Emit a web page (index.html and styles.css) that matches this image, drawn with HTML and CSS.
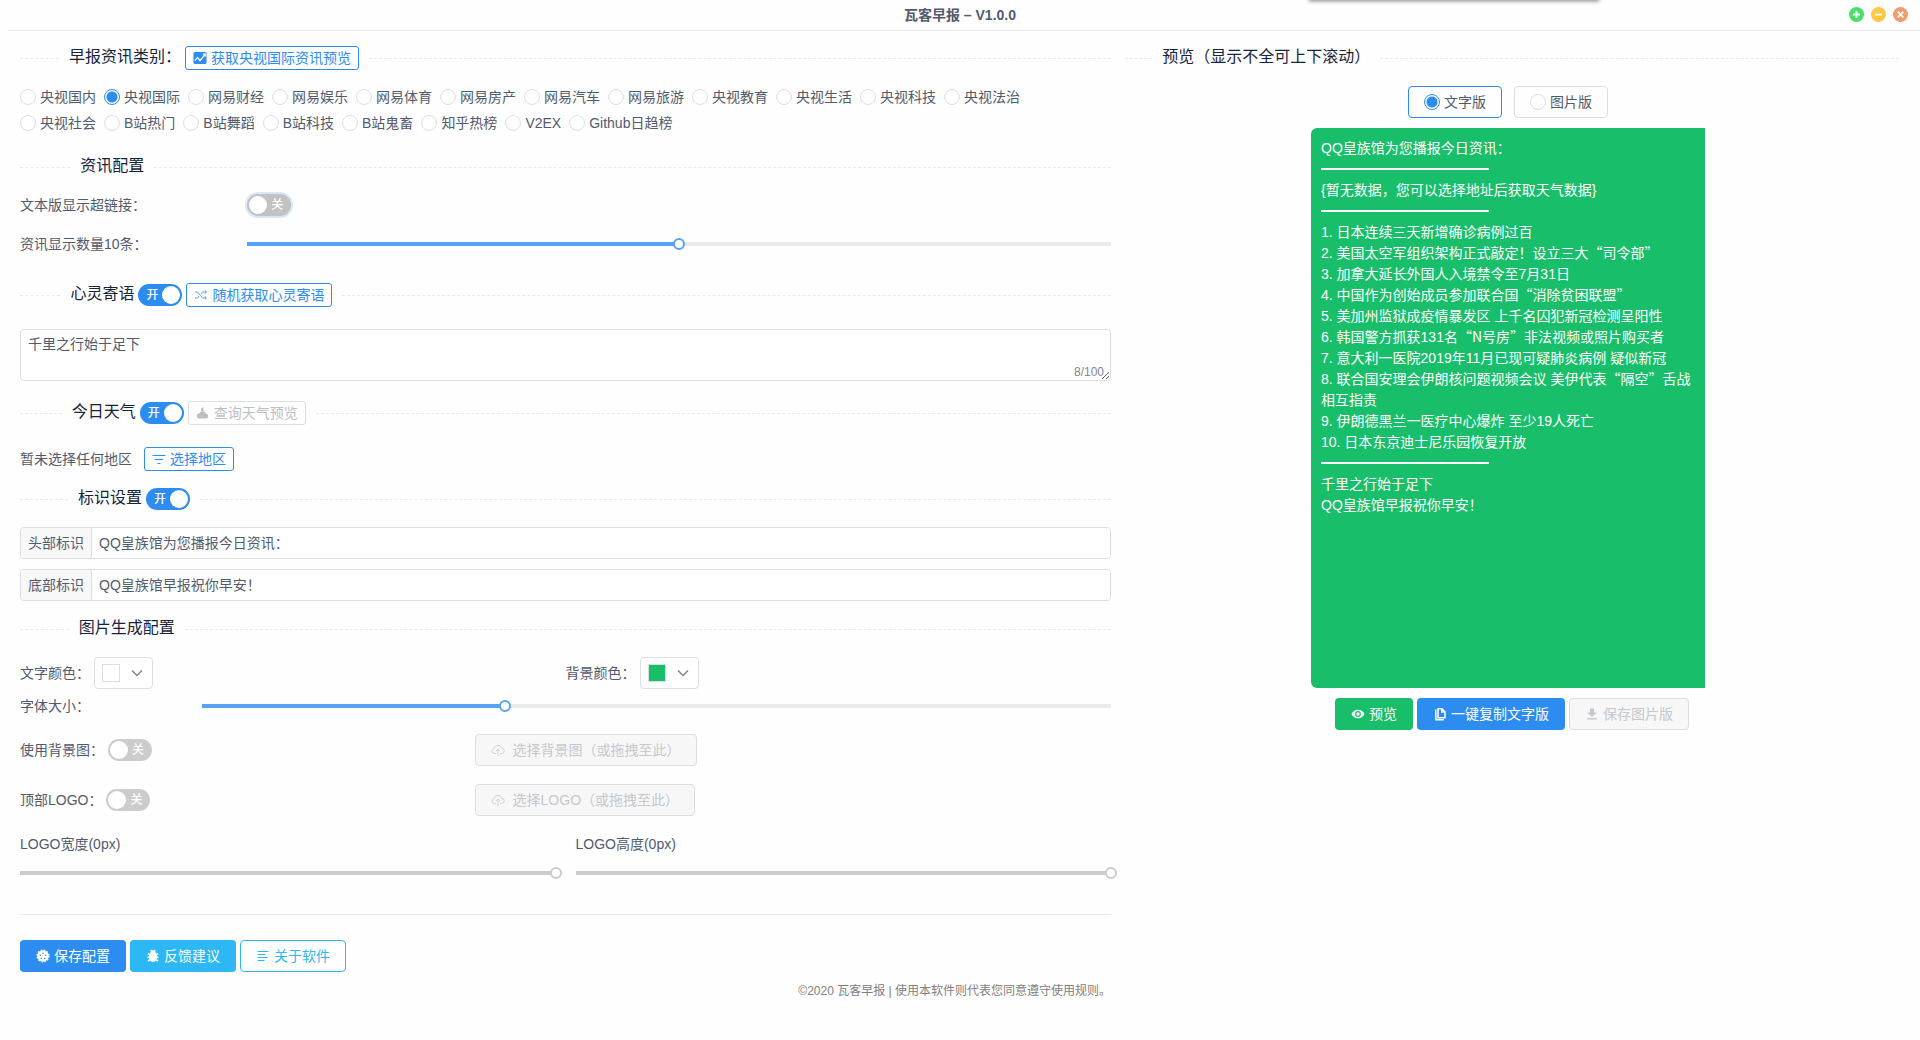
FILE: index.html
```html
<!DOCTYPE html>
<html lang="zh-CN">
<head>
<meta charset="utf-8">
<meta name="viewport" content="width=device-width, initial-scale=1">
<title>瓦客早报</title>
<link rel="stylesheet" href="styles.css">
</head>
<body>
<div class="top-tab" aria-hidden="true"></div>
<header class="titlebar">
  <h1 class="title">瓦客早报 – V1.0.0</h1>
  <div class="window-controls">
    <button type="button" class="dot dot-max" aria-label="最大化"><svg viewBox="0 0 16 16"><path d="M8 4.2v7.6M4.2 8h7.6"/></svg></button>
    <button type="button" class="dot dot-min" aria-label="最小化"><svg viewBox="0 0 16 16"><path d="M4.2 8h7.6"/></svg></button>
    <button type="button" class="dot dot-close" aria-label="关闭"><svg viewBox="0 0 16 16"><path d="M5 5l6 6M11 5l-6 6"/></svg></button>
  </div>
</header>

<main class="layout">
  <form class="settings">
    <div class="divider divider-first">
      <div class="divider-text"><h2>早报资讯类别：</h2>
        <button type="button" class="btn btn-small btn-outline"><svg class="icon" viewBox="0 0 14 14"><rect x=".5" y="1" width="13" height="12" rx="1.5" fill="currentColor"/><path d="M2 9.500l2.600-3 2.400 3.200L12 3.500M9.800 3.200h2.400v2.400" fill="none" stroke="#fff" stroke-width="1.200"/></svg>获取央视国际资讯预览</button>
      </div>
    </div>

    <div class="categories" role="radiogroup" aria-label="早报资讯类别">
      <label class="radio"><input type="radio" name="cat">央视国内</label>
      <label class="radio"><input type="radio" name="cat" checked>央视国际</label>
      <label class="radio"><input type="radio" name="cat">网易财经</label>
      <label class="radio"><input type="radio" name="cat">网易娱乐</label>
      <label class="radio"><input type="radio" name="cat">网易体育</label>
      <label class="radio"><input type="radio" name="cat">网易房产</label>
      <label class="radio"><input type="radio" name="cat">网易汽车</label>
      <label class="radio"><input type="radio" name="cat">网易旅游</label>
      <label class="radio"><input type="radio" name="cat">央视教育</label>
      <label class="radio"><input type="radio" name="cat">央视生活</label>
      <label class="radio"><input type="radio" name="cat">央视科技</label>
      <label class="radio"><input type="radio" name="cat">央视法治</label>
      <label class="radio"><input type="radio" name="cat">央视社会</label>
      <label class="radio"><input type="radio" name="cat">B站热门</label>
      <label class="radio"><input type="radio" name="cat">B站舞蹈</label>
      <label class="radio"><input type="radio" name="cat">B站科技</label>
      <label class="radio"><input type="radio" name="cat">B站鬼畜</label>
      <label class="radio"><input type="radio" name="cat">知乎热榜</label>
      <label class="radio"><input type="radio" name="cat">V2EX</label>
      <label class="radio"><input type="radio" name="cat">Github日趋榜</label>
    </div>

    <div class="divider divider-news">
      <div class="divider-text"><h2>资讯配置</h2></div>
    </div>
    <div class="row row-5">
      <label for="links">文本版显示超链接：</label>
      <label class="switch switch-focus"><input type="checkbox" id="links"><span>关</span></label>
    </div>
    <div class="row row-5">
      <label for="count">资讯显示数量10条：</label>
      <input class="slider" type="range" id="count" min="0" max="20" value="10" style="--fill: .5">
    </div>

    <div class="divider divider-quote">
      <div class="divider-text"><h2>心灵寄语</h2>
        <label class="switch switch-on"><input type="checkbox" checked aria-label="心灵寄语"><span>开</span></label>
        <button type="button" class="btn btn-small btn-outline"><svg class="icon icon-thin" viewBox="0 0 14 14"><path d="M1 4h2.500l5 6H12M1 10h2.500l1.600-2M7 6l1.500-2H12M10.800 2.500L12.500 4l-1.700 1.500M10.800 8.500l1.700 1.500-1.700 1.500"/></svg>随机获取心灵寄语</button>
      </div>
    </div>
    <div class="note">
      <textarea aria-label="心灵寄语内容" maxlength="100">千里之行始于足下</textarea>
      <span class="note-count">8/100</span>
    </div>

    <div class="divider divider-weather">
      <div class="divider-text"><h2>今日天气</h2>
        <label class="switch switch-on"><input type="checkbox" checked aria-label="今日天气"><span>开</span></label>
        <button type="button" class="btn btn-small btn-muted" disabled><svg class="icon" viewBox="0 0 14 14"><path fill="currentColor" d="M3.500 12.500a2.500 2.500 0 0 1-.3-5A3.600 3.600 0 0 1 10 7.600a2.500 2.500 0 0 1 .4 4.900zM5 5.200A2.700 2.700 0 0 1 7.800 1.500 3 3 0 0 0 9 5.600 4.500 4.500 0 0 0 5 5.200z"/></svg>查询天气预览</button>
      </div>
    </div>
    <div class="region">
      <span>暂未选择任何地区</span>
      <button type="button" class="btn btn-small btn-outline"><svg class="icon icon-line" viewBox="0 0 14 14"><path d="M.5 3.500h13M3 7.500h8M5.500 11.500h3"/></svg>选择地区</button>
    </div>

    <div class="divider divider-mark">
      <div class="divider-text"><h2>标识设置</h2>
        <label class="switch switch-on"><input type="checkbox" checked aria-label="标识设置"><span>开</span></label>
      </div>
    </div>
    <div class="marks">
      <div class="input-group"><label for="head">头部标识</label><input type="text" id="head" value="QQ皇族馆为您播报今日资讯："></div>
      <div class="input-group"><label for="foot">底部标识</label><input type="text" id="foot" value="QQ皇族馆早报祝你早安！"></div>
    </div>

    <div class="divider divider-mark">
      <div class="divider-text"><h2>图片生成配置</h2></div>
    </div>
    <div class="colors">
      <div class="color-field"><label for="fg">文字颜色：</label>
        <button type="button" class="picker" id="fg"><span class="swatch swatch-white"></span><svg class="chevron" viewBox="0 0 14 14"><path d="M2 4.500l5 5 5-5"/></svg></button></div>
      <div class="color-field"><label for="bg">背景颜色：</label>
        <button type="button" class="picker" id="bg"><span class="swatch swatch-green"></span><svg class="chevron" viewBox="0 0 14 14"><path d="M2 4.500l5 5 5-5"/></svg></button></div>
    </div>
    <div class="row row-4">
      <label for="size">字体大小：</label>
      <input class="slider" type="range" id="size" min="0" max="30" value="10" style="--fill: .333">
    </div>
    <div class="row row-10">
      <div class="switch-field"><label for="usebg">使用背景图：</label><label class="switch"><input type="checkbox" id="usebg"><span>关</span></label></div>
      <button type="button" class="btn btn-disabled btn-upload" disabled><svg class="icon icon-thin" viewBox="0 0 14 14"><path d="M5 10.500H3.300A2.500 2.500 0 0 1 3 5.600 4 4 0 0 1 10.800 5.300a2.600 2.600 0 0 1-.2 5.200H9M7 13V6M5 8l2-2 2 2"/></svg><span>选择背景图<span class="paren" lang="zh-Hant">（</span>或拖拽至此<span class="paren" lang="zh-Hant">）</span></span></button>
    </div>
    <div class="row row-10 row-logo">
      <div class="switch-field"><label for="uselogo">顶部LOGO：</label><label class="switch"><input type="checkbox" id="uselogo"><span>关</span></label></div>
      <button type="button" class="btn btn-disabled btn-upload" disabled><svg class="icon icon-thin" viewBox="0 0 14 14"><path d="M5 10.500H3.300A2.500 2.500 0 0 1 3 5.600 4 4 0 0 1 10.800 5.300a2.600 2.600 0 0 1-.2 5.200H9M7 13V6M5 8l2-2 2 2"/></svg><span>选择LOGO<span class="paren" lang="zh-Hant">（</span>或拖拽至此<span class="paren" lang="zh-Hant">）</span></span></button>
    </div>
    <div class="logo-size">
      <div class="logo-field"><label for="lw">LOGO宽度(0px)</label><input class="slider" type="range" id="lw" value="100" disabled style="--fill: 1"></div>
      <div class="logo-field"><label for="lh">LOGO高度(0px)</label><input class="slider" type="range" id="lh" value="100" disabled style="--fill: 1"></div>
    </div>

    <hr class="rule">
    <div class="actions">
      <button type="button" class="btn btn-primary"><svg class="icon" viewBox="0 0 14 14"><circle cx="7" cy="7" r="5.800" fill="currentColor"/><circle cx="7" cy="7" r="6" fill="none" stroke="currentColor" stroke-width="1.200" stroke-dasharray="1.600 1.540"/><g fill="#2d8cf0"><circle cx="7" cy="4.200" r=".8"/><circle cx="9.700" cy="6.200" r=".8"/><circle cx="4.300" cy="6.200" r=".8"/><circle cx="8.700" cy="9.500" r=".8"/><circle cx="5.300" cy="9.500" r=".8"/></g></svg>保存配置</button>
      <button type="button" class="btn btn-info"><svg class="icon" viewBox="0 0 14 14"><ellipse cx="7" cy="8" rx="4.200" ry="5" fill="currentColor"/><path d="M4.300 4a2.700 2.700 0 0 1 5.400 0z" fill="currentColor"/><path d="M4.800.8L6 2.500M9.200.8L8 2.500M1.800 4.500l3 1.500M12.200 4.500l-3 1.500M1.500 8.200h11M1.800 12l3-1.500M12.200 12l-3-1.500" stroke="currentColor" stroke-width="1.400"/></svg>反馈建议</button>
      <button type="button" class="btn btn-info-outline"><svg class="icon icon-line" viewBox="0 0 14 14"><path d="M1.500 2.500h11M1.500 5.500h8M1.500 8.500h10M1.500 11.500h7"/></svg>关于软件</button>
    </div>
    <footer class="copyright">©2020 瓦客早报 | 使用本软件则代表您同意遵守使用规则。</footer>
  </form>

  <section class="preview">
    <div class="divider divider-first">
      <div class="divider-text"><h2>预览<span class="paren" lang="zh-Hant">（</span>显示不全可上下滚动<span class="paren" lang="zh-Hant">）</span></h2></div>
    </div>
    <div class="stage">
      <div class="modes">
        <label class="radio radio-box radio-box-on"><input type="radio" name="mode" checked>文字版</label>
        <label class="radio radio-box"><input type="radio" name="mode">图片版</label>
      </div>
      <article class="bulletin">
        <p>QQ皇族馆为您播报今日资讯：</p>
        <hr>
        <p>{暂无数据，您可以选择地址后获取天气数据}</p>
        <hr>
        <p>1. 日本连续三天新增确诊病例过百</p>
        <p>2. 美国太空军组织架构正式敲定！设立三大<span class="mark">“司令部”</span></p>
        <p>3. 加拿大延长外国人入境禁令至7月31日</p>
        <p>4. 中国作为创始成员参加联合国<span class="mark">“消除贫困联盟”</span></p>
        <p>5. 美加州监狱成疫情暴发区 上千名囚犯新冠检测呈阳性</p>
        <p>6. 韩国警方抓获131名<span class="mark">“N号房”</span>非法视频或照片购买者</p>
        <p>7. 意大利一医院2019年11月已现可疑肺炎病例 疑似新冠</p>
        <p>8. 联合国安理会伊朗核问题视频会议 美伊代表<span class="mark">“隔空”</span>舌战相互指责</p>
        <p>9. 伊朗德黑兰一医疗中心爆炸 至少19人死亡</p>
        <p>10. 日本东京迪士尼乐园恢复开放</p>
        <hr>
        <p>千里之行始于足下</p>
        <p>QQ皇族馆早报祝你早安！</p>
      </article>
    </div>
    <div class="preview-actions">
      <button type="button" class="btn btn-success"><svg class="icon" viewBox="0 0 14 14"><path fill="currentColor" fill-rule="evenodd" d="M7 2.800C4 2.800 1.600 4.600.5 7 1.600 9.400 4 11.200 7 11.200s5.400-1.800 6.500-4.200C12.400 4.600 10 2.800 7 2.800zM7 9.900a2.900 2.900 0 1 1 0-5.800 2.900 2.900 0 0 1 0 5.800zM7 5.300a1.700 1.700 0 1 0 0 3.400 1.700 1.700 0 0 0 0-3.400z"/></svg>预览</button>
      <button type="button" class="btn btn-primary"><svg class="icon" viewBox="0 0 14 14"><path d="M5 1.700h4l3 3v6.100H5zM8.700 1.700v3.300H12M2.800 2.500v10.200h8" fill="none" stroke="currentColor" stroke-width="1.500"/></svg>一键复制文字版</button>
      <button type="button" class="btn btn-disabled" disabled><svg class="icon" viewBox="0 0 14 14"><path fill="currentColor" d="M5 1.500h4v4h2.700L7 10 2.300 5.500H5zM2.300 11h9.400v1.500H2.300z"/></svg>保存图片版</button>
    </div>
  </section>
</main>
</body>
</html>
```
FILE: styles.css
```css
:root {
  --primary: #2d8cf0;
  --info: #2db7f5;
  --success: #19be6b;
  --text: #515a6e;
  --heading: #17233d;
  --border: #dcdee2;
  --line: #e8eaec;
  --muted: #c5c8ce;
  --page: #fefefe;
}

* {
  box-sizing: border-box;
}

body {
  margin: 0;
  background: var(--page);
  color: var(--text);
  font-family: "Liberation Sans", "Noto Sans CJK SC", sans-serif;
  font-size: 14px;
  line-height: 24px;
}

button,
input,
textarea {
  font: inherit;
  color: inherit;
  margin: 0;
}

h1,
h2,
p {
  margin: 0;
}

/* Title bar */
.top-tab {
  position: absolute;
  top: -10px;
  left: 1310px;
  width: 288px;
  height: 10px;
  box-shadow: 0 0 4px 1px rgba(0, 0, 0, .5);
}

.titlebar {
  display: grid;
  grid-template-columns: 1fr auto 1fr;
  align-items: center;
  height: 31px;
  padding: 0 12px;
  background: linear-gradient(var(--line), var(--line)) 8px bottom / 100% 1px no-repeat;
}

.title {
  grid-column: 2;
  font-size: 14px;
  font-weight: 700;
  line-height: 28px;
  padding-bottom: 2px;
}

.window-controls {
  display: flex;
  justify-content: flex-end;
  gap: 7px;
  padding-bottom: 2px;
}

.dot {
  display: flex;
  width: 15px;
  height: 15px;
  padding: 0;
  border: 0;
  border-radius: 50%;
}

.dot svg {
  width: 15px;
  height: 15px;
  fill: none;
  stroke: #fff;
  stroke-width: 2;
}

.dot-max { background: #47e068; }
.dot-min { background: #ffc648; }
.dot-close { background: #f39b6d; }

.layout {
  display: grid;
  grid-template-columns: 117fr 83fr;
  gap: 14px;
  padding: 0 21px 0 20px;
}

/* Section dividers */
.divider {
  display: flex;
  align-items: center;
  height: 24px;
}

.divider::before,
.divider::after {
  content: "";
  width: 5%;
  border-top: 1px dashed var(--line);
}

.divider::after {
  width: 95%;
}

.divider-text {
  display: flex;
  flex: none;
  align-items: center;
  gap: 4px;
  padding: 0 10px;
}

.divider h2 {
  color: var(--heading);
  font-size: 16px;
  font-weight: 400;
  line-height: 22px;
  padding-bottom: 2px;
}

.divider-first { margin-top: 15px; }
.divider-news { margin-top: 19px; }
.divider-quote { margin-top: 27px; }
.divider-weather { margin-top: 20px; }
.divider-mark { margin-top: 16px; }

/* Centred full-width brackets */
.paren {
  font-family: "Noto Sans CJK TC", sans-serif;
  line-height: 1;
}

/* Buttons */
.btn {
  display: inline-flex;
  flex: none;
  align-items: center;
  justify-content: center;
  gap: 4px;
  height: 32px;
  padding: 0 15px;
  border: 1px solid transparent;
  border-radius: 4px;
  background: #fff;
  line-height: 20px;
  white-space: nowrap;
}

.btn-small {
  height: 24px;
  padding: 0 7px;
  border-radius: 3px;
}

.btn-outline {
  border-color: var(--primary);
  color: var(--primary);
}

.btn-muted {
  border-color: var(--border);
  color: #bbbec4;
}

.btn-disabled {
  border-color: var(--border);
  background: #f7f7f7;
  color: var(--muted);
}

.btn-upload {
  justify-self: start;
  gap: 8px;
}

.btn-primary {
  background: var(--primary);
  color: #fff;
}

.btn-info {
  background: var(--info);
  color: #fff;
}

.btn-success {
  background: var(--success);
  color: #fff;
}

.btn-info-outline {
  border-color: var(--info);
  color: var(--info);
}

.icon {
  width: 14px;
  height: 14px;
}

.icon-line,
.icon-thin {
  fill: none;
  stroke: currentColor;
  stroke-width: 1;
}

.icon-thin {
  stroke-width: .8;
}

/* Radios */
.categories {
  display: flex;
  flex-wrap: wrap;
  margin-top: 14px;
  padding-right: 16px;
}

.radio {
  display: inline-flex;
  align-items: center;
  gap: 4px;
  margin-right: 8px;
  line-height: 26px;
}

.radio input {
  appearance: none;
  width: 16px;
  height: 16px;
  border: 1px solid var(--border);
  border-radius: 50%;
  background: #fff;
}

.radio input:checked {
  border-color: var(--primary);
  background: radial-gradient(circle, var(--primary) 5px, #fff 6px);
}

.radio-box {
  height: 32px;
  margin: 0;
  padding: 0 15px;
  border: 1px solid var(--border);
  border-radius: 4px;
}

.radio-box-on {
  border-color: var(--primary);
}

/* Form rows */
.row {
  display: grid;
  align-items: center;
  margin-top: 16px;
}

.row-4 {
  grid-template-columns: 4fr 20fr;
  margin-top: 5px;
}

.row-5 {
  grid-template-columns: 5fr 19fr;
}

.row-10 {
  grid-template-columns: 10fr 14fr;
}

.row-logo {
  margin-top: 18px;
}

.divider-news + .row {
  margin-top: 14px;
}

.divider-news + .row + .row {
  margin-top: 15px;
}

.switch {
  position: relative;
  display: block;
  flex: none;
  width: 44px;
  height: 22px;
  padding-left: 24px;
  border-radius: 11px;
  background: #ccc;
  color: #fff;
  font-size: 12px;
  font-weight: 500;
  line-height: 22px;
}

.switch input {
  position: absolute;
  inset: 0;
  width: 100%;
  height: 100%;
  opacity: 0;
}

.switch::after {
  content: "";
  position: absolute;
  top: 2px;
  left: 2px;
  width: 18px;
  height: 18px;
  border-radius: 50%;
  background: #fff;
}

.switch-on {
  padding-left: 8px;
  background: var(--primary);
}

.switch-on::after {
  left: 24px;
}

.switch-focus {
  background: #c2c2c2;
  box-shadow: 0 0 0 2px #d5e8fc;
}

.switch-field {
  display: flex;
  align-items: center;
  gap: 4px;
}

/* The rail is inset by half a thumb so the thumb centre meets its ends */
.slider {
  --rail: #e8eaec;
  --bar: #57a3f3;
  appearance: none;
  width: calc(100% + 12px);
  height: 12px;
  margin: 0 -6px;
  background:
    linear-gradient(var(--bar), var(--bar)) 6px center / calc((100% - 12px) * var(--fill)) 4px no-repeat,
    linear-gradient(var(--rail), var(--rail)) 6px center / calc(100% - 12px) 4px no-repeat;
}

.slider:disabled {
  --bar: #ccc;
}

.slider::-webkit-slider-thumb {
  appearance: none;
  width: 12px;
  height: 12px;
  border: 2px solid var(--bar);
  border-radius: 50%;
  background: #fff;
}

.note {
  position: relative;
  display: flex;
  margin-top: 22px;
}

.note textarea {
  width: 100%;
  height: 52px;
  padding: 4px 7px;
  border: 1px solid var(--border);
  border-radius: 4px;
  background: #fff;
  line-height: 21px;
  resize: vertical;
}

.note-count {
  position: absolute;
  right: 7px;
  bottom: 0;
  color: #808695;
  font-size: 12px;
  line-height: 18px;
}

.region {
  display: flex;
  align-items: center;
  gap: 12px;
  margin-top: 22px;
}

.marks {
  display: grid;
  gap: 10px;
  margin-top: 16px;
}

.input-group {
  display: flex;
  height: 32px;
  border: 1px solid var(--border);
  border-radius: 4px;
  overflow: hidden;
}

.input-group label {
  padding: 0 7px;
  border-right: 1px solid var(--border);
  background: #f8f8f9;
  line-height: 30px;
}

.input-group input {
  flex: 1;
  min-width: 0;
  padding: 0 7px;
  border: 0;
  background: #fff;
}

.colors {
  display: grid;
  grid-template-columns: 1fr 1fr;
  margin-top: 16px;
}

.color-field {
  display: flex;
  align-items: center;
  gap: 4px;
}

.picker {
  display: flex;
  align-items: center;
  justify-content: space-between;
  width: 59px;
  height: 32px;
  padding: 0 8px 0 7px;
  border: 1px solid var(--border);
  border-radius: 4px;
  background: #fff;
}

.swatch {
  width: 18px;
  height: 18px;
  border: 1px solid var(--border);
}

.swatch-white { background: #fff; }
.swatch-green { background: var(--success); }

.chevron {
  width: 14px;
  height: 14px;
  fill: none;
  stroke: #808695;
  stroke-width: 1.500;
}

.logo-size {
  display: grid;
  grid-template-columns: 1fr 1fr;
  gap: 20px;
  margin-top: 16px;
}

.logo-field {
  display: grid;
  gap: 11px;
}

.rule {
  margin: 35px 0 25px;
  border: 0;
  border-top: 1px solid var(--line);
}

.actions,
.preview-actions {
  display: flex;
  gap: 4px;
}

.copyright {
  margin-top: 10px;
  color: #808080;
  font-size: 12px;
  line-height: 18px;
  text-align: right;
}

/* Preview */
.stage {
  padding-right: 8px;
}

.modes {
  display: flex;
  justify-content: center;
  gap: 12px;
  margin-top: 16px;
}

.bulletin {
  width: 394px;
  max-width: 100%;
  min-height: 560px;
  margin: 10px auto;
  padding: 10px;
  border-radius: 6px 0 0 6px;
  background: var(--success);
  color: #fff;
  line-height: 21px;
}

.bulletin hr {
  width: 168px;
  margin: 9px 0 10px;
  border: 0;
  border-top: 2px solid #fff;
}

/* Quotation marks take a full character width */
.mark {
  font-family: "Noto Sans CJK SC", sans-serif;
  line-height: 1;
}

.preview-actions {
  justify-content: center;
}
```
